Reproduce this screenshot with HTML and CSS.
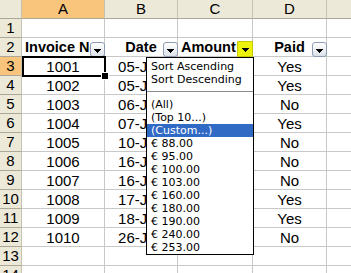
FILE: index.html
```html
<!DOCTYPE html>
<html lang="en">
<head>
  <meta charset="UTF-8" />
  <title>Invoices</title>
  <link rel="stylesheet" href="styles.css">
</head>
<body>
  <div class="sheet">
    <div class="corner"></div>
    <div class="ch sel">A</div>
    <div class="ch">B</div>
    <div class="ch">C</div>
    <div class="ch">D</div>
    <div class="ch"></div>

    <div class="rh">1</div>
    <div class="c"></div><div class="c"></div><div class="c"></div><div class="c"></div><div class="c"></div>

    <div class="rh">2</div>
    <div class="c hd left">Invoice No<span class="dd"><svg width="7" height="4"><path d="M0 0h7L3.5 4z"/></svg></span></div>
    <div class="c hd">Date<span class="dd"><svg width="7" height="4"><path d="M0 0h7L3.5 4z"/></svg></span></div>
    <div class="c hd left">Amount<span class="dd on"><svg width="7" height="4"><path d="M0 0h7L3.5 4z"/></svg></span></div>
    <div class="c hd">Paid<span class="dd"><svg width="7" height="4"><path d="M0 0h7L3.5 4z"/></svg></span></div>
    <div class="c"></div>

    <div class="rh sel">3</div>
    <div class="c active">1001</div><div class="c">05-Jan</div><div class="c"></div><div class="c">Yes</div><div class="c"></div>
    <div class="rh">4</div>
    <div class="c">1002</div><div class="c">05-Jan</div><div class="c"></div><div class="c">Yes</div><div class="c"></div>
    <div class="rh">5</div>
    <div class="c">1003</div><div class="c">06-Jan</div><div class="c"></div><div class="c">No</div><div class="c"></div>
    <div class="rh">6</div>
    <div class="c">1004</div><div class="c">07-Jan</div><div class="c"></div><div class="c">Yes</div><div class="c"></div>
    <div class="rh">7</div>
    <div class="c">1005</div><div class="c">10-Jan</div><div class="c"></div><div class="c">No</div><div class="c"></div>
    <div class="rh">8</div>
    <div class="c">1006</div><div class="c">16-Jan</div><div class="c"></div><div class="c">No</div><div class="c"></div>
    <div class="rh">9</div>
    <div class="c">1007</div><div class="c">16-Jan</div><div class="c"></div><div class="c">No</div><div class="c"></div>
    <div class="rh">10</div>
    <div class="c">1008</div><div class="c">17-Jan</div><div class="c"></div><div class="c">Yes</div><div class="c"></div>
    <div class="rh">11</div>
    <div class="c">1009</div><div class="c">18-Jan</div><div class="c"></div><div class="c">Yes</div><div class="c"></div>
    <div class="rh">12</div>
    <div class="c">1010</div><div class="c">26-Jan</div><div class="c"></div><div class="c">No</div><div class="c"></div>
    <div class="rh">13</div>
    <div class="c"></div><div class="c"></div><div class="c"></div><div class="c"></div><div class="c"></div>
    <div class="rh">14</div>
    <div class="c"></div><div class="c"></div><div class="c"></div><div class="c"></div><div class="c"></div>

    <ul class="filter">
      <li>Sort Ascending</li>
      <li>Sort Descending</li>
      <li class="sep"></li>
      <li>(All)</li>
      <li>(Top 10...)</li>
      <li class="hi">(Custom...)</li>
      <li>€ 88.00</li>
      <li>€ 95.00</li>
      <li>€ 100.00</li>
      <li>€ 103.00</li>
      <li>€ 160.00</li>
      <li>€ 180.00</li>
      <li>€ 190.00</li>
      <li>€ 240.00</li>
      <li>€ 253.00</li>
    </ul>
  </div>
</body>
</html>
```

FILE: styles.css
```css
* {
  box-sizing: border-box;
}

body {
  margin: 0;
  background: #ffffff;
  font-family: "Liberation Sans", Arial, sans-serif;
  overflow: hidden;
}

.sheet {
  position: relative;
  display: grid;
  grid-template-columns: 22px 83px 73px 75px 74px 60px;
  grid-auto-rows: 19px;
  width: 387px;
}

.corner,
.ch,
.rh {
  background: #ece9d8;
  border-right: 1px solid #c5c2b2;
  border-bottom: 1px solid #aca899;
  color: #000;
  font-family: "Liberation Sans Narrow", "Liberation Sans", sans-serif;
  font-size: 15px;
  line-height: 18px;
  text-align: center;
}

.ch.sel,
.rh.sel {
  background: #f9c57c;
}

.c {
  position: relative;
  border-right: 1px solid #c8c8c8;
  border-bottom: 1px solid #c8c8c8;
  font-family: "Liberation Sans Narrow", "Liberation Sans", sans-serif;
  font-size: 15px;
  line-height: 19px;
  text-align: center;
  white-space: nowrap;
}

.hd {
  font-family: "Liberation Sans", Arial, sans-serif;
  font-weight: bold;
  font-size: 14.5px;
  line-height: 18px;
}

.hd.left {
  text-align: left;
  padding-left: 3px;
}

/* autofilter buttons */
.dd {
  position: absolute;
  right: -1px;
  bottom: -1px;
  width: 15px;
  height: 15px;
  display: flex;
  align-items: center;
  justify-content: center;
  padding-top: 2px;
  border: 1px solid #8e9cb4;
  border-radius: 3px;
  background: linear-gradient(#ffffff, #dde2ea);
}

.dd svg {
  display: block;
  shape-rendering: crispEdges;
}

.dd.on {
  width: 16px;
  height: 16px;
  border-color: #c8c800;
  border-radius: 1px;
  background: #ecf20c;
}

.active {
  z-index: 1;
}

.active::after {
  content: "";
  position: absolute;
  left: 0;
  top: -1px;
  right: -2px;
  bottom: -2px;
  border: 2px solid #000;
}

.active::before {
  content: "";
  position: absolute;
  right: -5px;
  bottom: -5px;
  width: 6px;
  height: 6px;
  background: #000;
  border: 1px solid #fff;
  z-index: 2;
}

/* filter list */
.filter {
  position: absolute;
  left: 146px;
  top: 57px;
  width: 108px;
  height: 198px;
  margin: 0;
  padding: 2px 0 0;
  list-style: none;
  background: #fff;
  border: 1px solid #000;
  font-family: "DejaVu Sans", sans-serif;
  font-size: 11px;
  z-index: 3;
}

.filter li {
  height: 13px;
  line-height: 13px;
  padding-left: 4px;
  white-space: nowrap;
}

.filter .sep {
  height: 12px;
  padding: 0;
  border-top: 5px solid #fff;
  border-bottom: 6px solid #fff;
  background: #8c8c8c;
}

.filter .hi {
  background: #316ac5;
  color: #fff;
}
```
